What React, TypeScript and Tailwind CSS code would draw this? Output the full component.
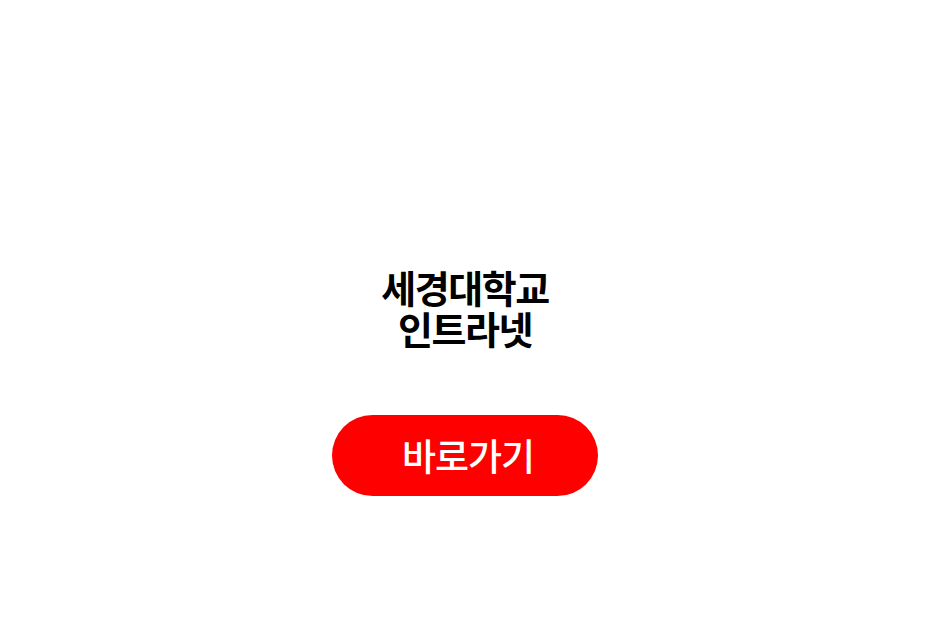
export default function App() {
  return (
    <div
      className="flex min-h-screen flex-col items-center bg-white pt-[266px]"
      style={{ fontFamily: '"Noto Sans CJK KR", "Noto Sans", sans-serif' }}
    >
      <h1 className="flex flex-col items-center text-[38px] font-bold leading-[41px] tracking-[-1.5px] text-black">
        <span>세경대학교</span>
        <span>인트라넷</span>
      </h1>
      <button className="mt-[67px] flex h-[81px] w-[266px] items-center justify-center rounded-full bg-[#fe0000] pl-[6px] text-[37px] font-medium tracking-[-1px] text-white">
        바로가기
      </button>
    </div>
  );
}
